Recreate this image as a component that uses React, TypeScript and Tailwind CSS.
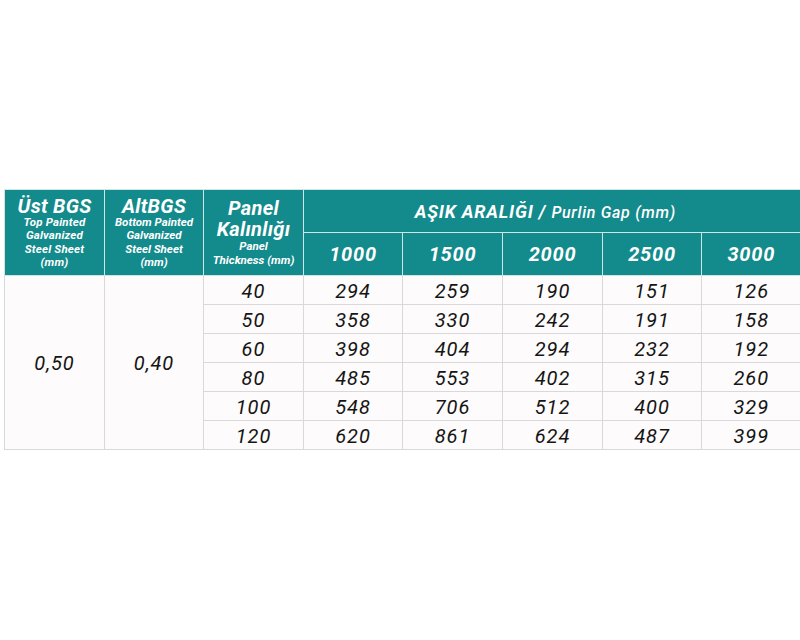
import React from "react";

const rows = [
  ["40", "294", "259", "190", "151", "126"],
  ["50", "358", "330", "242", "191", "158"],
  ["60", "398", "404", "294", "232", "192"],
  ["80", "485", "553", "402", "315", "260"],
  ["100", "548", "706", "512", "400", "329"],
  ["120", "620", "861", "624", "487", "399"],
];

const gaps = ["1000", "1500", "2000", "2500", "3000"];

export default function App() {
  return (
    <div
      className="w-[800px] h-[640px] bg-white pt-[189px] pl-[4px] overflow-hidden"
      style={{ fontFamily: 'Roboto, "Open Sans", sans-serif' }}
    >
      <table className="border-collapse table-fixed w-[796px] italic">
        <colgroup>
          <col className="w-[100px]" />
          <col className="w-[99px]" />
          <col className="w-[100px]" />
          <col className="w-[99px]" />
          <col className="w-[100px]" />
          <col className="w-[100px]" />
          <col className="w-[99px]" />
          <col className="w-[99px]" />
        </colgroup>
        <thead>
          <tr className="h-[43px]">
            <th
              rowSpan={2}
              className="bg-[#138a8b] text-white border border-[#cfe6e6] align-middle font-bold leading-none p-0"
            >
              <div className="text-[20px] leading-[20px] tracking-[0.3px]">Üst BGS</div>
              <div className="text-[11.5px] leading-[13.5px] font-bold tracking-[0.2px]">
                Top Painted
                <br />
                Galvanized
                <br />
                Steel Sheet
                <br />
                (mm)
              </div>
            </th>
            <th
              rowSpan={2}
              className="bg-[#138a8b] text-white border border-[#cfe6e6] align-middle font-bold leading-none p-0"
            >
              <div className="text-[20px] leading-[20px] tracking-[0.3px]">AltBGS</div>
              <div className="text-[11.5px] leading-[13.5px] font-bold">
                Bottom Painted
                <br />
                Galvanized
                <br />
                Steel Sheet
                <br />
                (mm)
              </div>
            </th>
            <th
              rowSpan={2}
              className="bg-[#138a8b] text-white border border-[#cfe6e6] align-middle font-bold leading-none p-0"
            >
              <div className="text-[20px] leading-[21px] tracking-[0.3px]">
                Panel
                <br />
                Kalınlığı
              </div>
              <div className="text-[11.5px] leading-[13.5px] font-bold">
                Panel
                <br />
                Thickness (mm)
              </div>
            </th>
            <th
              colSpan={5}
              className="bg-[#138a8b] text-white border border-[#cfe6e6] border-r-0 align-middle p-0 pr-[14px]"
            >
              <span className="text-[18px] font-bold tracking-[0.8px]">AŞIK ARALIĞI / </span>
              <span className="text-[16px] font-medium tracking-[0.7px]">Purlin Gap (mm)</span>
            </th>
          </tr>
          <tr className="h-[43px]">
            {gaps.map((g, i) => (
              <th
                key={g}
                className={`bg-[#138a8b] text-white border border-[#cfe6e6] align-middle p-0 text-[20px] font-bold tracking-[0.8px] ${
                  i === 4 ? "border-r-0" : ""
                }`}
              >
                {g}
              </th>
            ))}
          </tr>
        </thead>
        <tbody className="bg-[#fdfbfb] text-[#151515]">
          {rows.map((r, ri) => (
            <tr key={ri} className="h-[29px]">
              {ri === 0 && (
                <>
                  <td
                    rowSpan={6}
                    className="border border-[#d9d9d9] text-center align-middle text-[20px] font-normal tracking-[1px] p-0"
                  >
                    0,50
                  </td>
                  <td
                    rowSpan={6}
                    className="border border-[#d9d9d9] text-center align-middle text-[20px] font-normal tracking-[1px] p-0"
                  >
                    0,40
                  </td>
                </>
              )}
              {r.map((v, ci) => (
                <td
                  key={ci}
                  className={`border border-[#d9d9d9] text-center align-middle text-[20px] font-normal tracking-[1px] p-0 leading-none pt-[2px] ${
                    ci === 5 ? "border-r-0" : ""
                  }`}
                >
                  {v}
                </td>
              ))}
            </tr>
          ))}
        </tbody>
      </table>
    </div>
  );
}
